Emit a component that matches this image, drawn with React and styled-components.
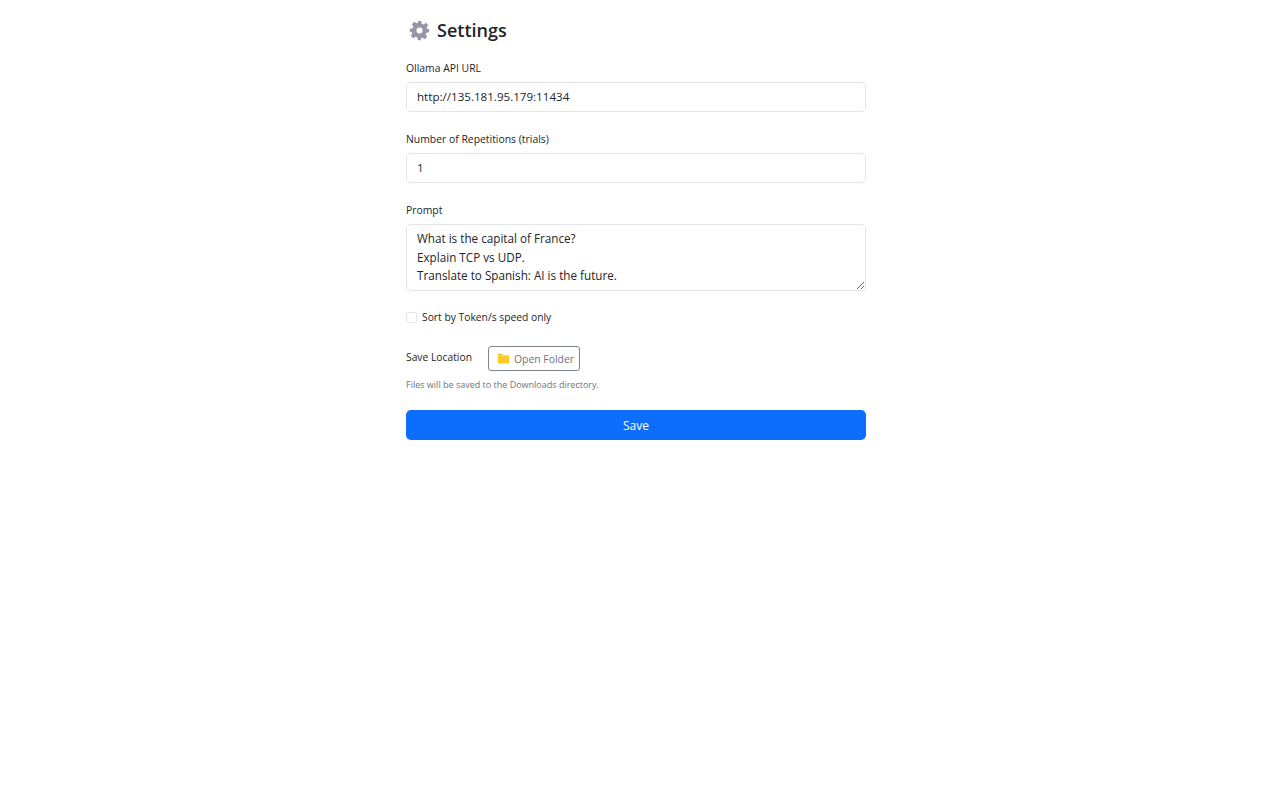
import React from "react";
import styled, { createGlobalStyle } from "styled-components";

const Global = createGlobalStyle`
    * { box-sizing: border-box; }
    body {
        margin: 0;
        background: #fff;
        color: #212529;
        font-family: "Open Sans", "Noto Sans", sans-serif;
    }
`;

const Page = styled.div`
    width: 460px;
    margin: 0 auto;
    position: relative;
    left: -4px;
    padding-top: 16px;
`;

const Title = styled.h1`
    display: flex;
    align-items: center;
    gap: 7px;
    margin: 0 0 15px 3px;
    height: 29px;
    font-size: 18px;
    font-weight: 600;
    line-height: 29px;
`;

const Field = styled.div`
    margin-bottom: ${(p) => p.$gap || 19}px;
`;

const Label = styled.label`
    display: block;
    margin-bottom: 6px;
    font-size: 10.4px;
    line-height: 16px;
`;

const Input = styled.input`
    display: block;
    width: 100%;
    height: 30px;
    padding: 0 10px 2px;
    border: 1px solid #e2e5e9;
    border-radius: 5px;
    outline: none;
    color: #212529;
    font: 11.6px/18px "Open Sans", "Noto Sans", sans-serif;
`;

const Area = styled.textarea`
    display: block;
    width: 100%;
    height: 67px;
    padding: 4px 10px;
    border: 1px solid #e2e5e9;
    border-radius: 5px;
    outline: none;
    color: #212529;
    font: 11.7px/18.5px "Open Sans", "Noto Sans", sans-serif;
`;

const CheckRow = styled.label`
    display: flex;
    align-items: center;
    gap: 5px;
    height: 18px;
    margin-bottom: 20px;
    font-size: 10.3px;
`;

const Check = styled.span`
    width: 11px;
    height: 11px;
    border: 1px solid #e2e5e9;
    border-radius: 2px;
    background: #fff;
`;

const SaveRow = styled.div`
    display: flex;
    align-items: center;
    gap: 16px;
    margin-bottom: 7px;
`;

const RowLabel = styled.span`
    font-size: 10.3px;
    position: relative;
    top: -2px;
`;

const FolderButton = styled.button`
    display: flex;
    align-items: center;
    gap: 4px;
    height: 25px;
    padding: 0 5px 0 8px;
    border: 1px solid #7d858c;
    border-radius: 3px;
    background: #fff;
    color: #6c757d;
    font: 10.4px "Open Sans", "Noto Sans", sans-serif;
`;

const Hint = styled.div`
    margin-bottom: 18px;
    color: #6c757d;
    font-size: 9px;
    line-height: 14px;
`;

const SaveButton = styled.button`
    display: block;
    width: 100%;
    height: 30px;
    border: 0;
    border-radius: 5px;
    background: #0d6efd;
    color: #fff;
    font: 12px "Open Sans", "Noto Sans", sans-serif;
`;

const GearIcon = () => (
    <svg width="21" height="21" viewBox="0 0 24 24" fill="#9a94a8">
        <path
            fillRule="evenodd"
            d="M10 1h4l.6 3.2 1.9.8 2.7-1.8 2.8 2.8-1.8 2.7.8 1.9L23 10v4l-3.2.6-.8 1.9 1.8 2.7-2.8 2.8-2.7-1.8-1.9.8L14 23h-4l-.6-3.2-1.900-.8-2.700 1.800-2.800-2.800 1.800-2.700-.8-1.900L1 14v-4l3.200-.6.8-1.900-1.800-2.700 2.800-2.800 2.700 1.800 1.900-.8zM12 8.500a3.500 3.500 0 1 0 0 7 3.500 3.500 0 0 0 0-7z"
        />
    </svg>
);

const FolderIcon = () => (
    <svg width="13" height="13" viewBox="0 0 16 16">
        <path fill="#f5b82e" d="M1 3.500C1 2.700 1.600 2 2.400 2h3.500l1.600 2h-6.500z" />
        <path fill="#ffca28" d="M1 4h12.600c.8 0 1.400.6 1.400 1.400v7.200c0 .8-.6 1.400-1.400 1.400H2.400C1.600 14 1 13.400 1 12.600z" />
    </svg>
);

export default function App() {
    return (
        <Page>
            <Global />
            <Title><GearIcon />Settings</Title>
            <Field>
                <Label>Ollama API URL</Label>
                <Input defaultValue="http://135.181.95.179:11434" />
            </Field>
            <Field>
                <Label>Number of Repetitions (trials)</Label>
                <Input defaultValue="1" />
            </Field>
            <Field $gap={17}>
                <Label>Prompt</Label>
                <Area
                    defaultValue={"What is the capital of France?\nExplain TCP vs UDP.\nTranslate to Spanish: AI is the future."}
                />
            </Field>
            <CheckRow><Check />Sort by Token/s speed only</CheckRow>
            <SaveRow>
                <RowLabel>Save Location</RowLabel>
                <FolderButton><FolderIcon />Open Folder</FolderButton>
            </SaveRow>
            <Hint>Files will be saved to the Downloads directory.</Hint>
            <SaveButton>Save</SaveButton>
        </Page>
    );
}
